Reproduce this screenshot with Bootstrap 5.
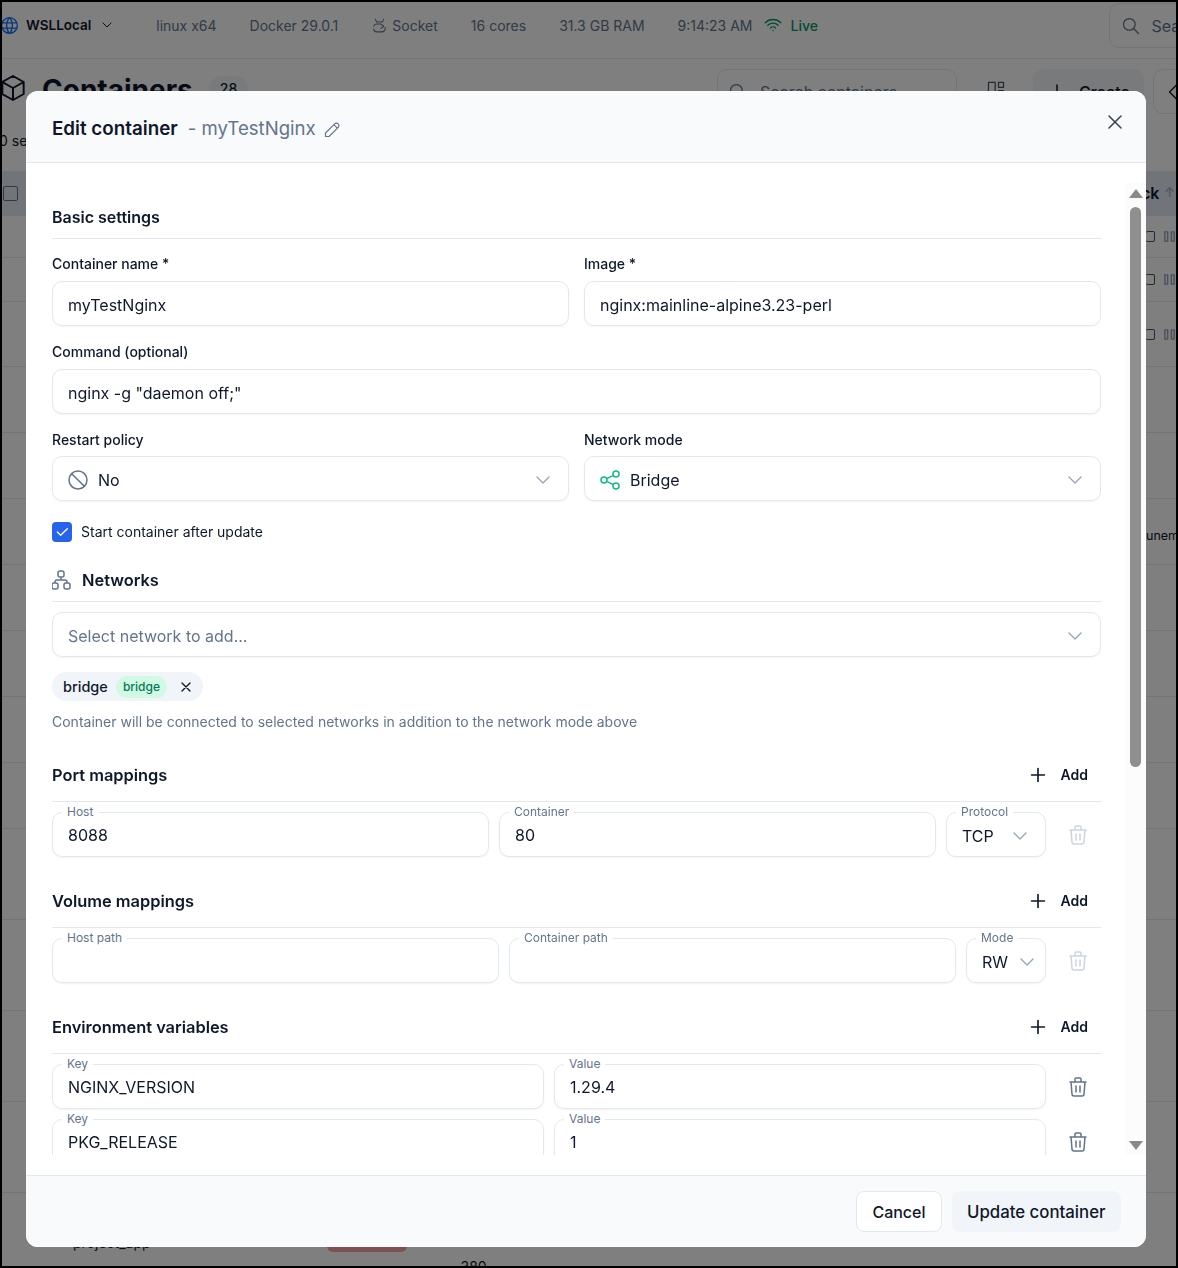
<!DOCTYPE html>
<html lang="en">
  <head>
    <meta charset="UTF-8" />
    <meta name="viewport" content="width=device-width, initial-scale=1.0" />
    <title>Edit container</title>
    <link href="https://cdn.jsdelivr.net/npm/bootstrap@5.3.3/dist/css/bootstrap.min.css" rel="stylesheet" />
    <style>
      html, body { height: 100%; overflow: hidden; }
      body { font-family: Inter, "Noto Sans", sans-serif; color: #0f172a; font-size: 14px; }
      .ico { fill: none; stroke: currentColor; stroke-width: 1.5; stroke-linecap: round; stroke-linejoin: round; flex: none; }

      /* page behind the dialog */
      .shot-frame { height: 1268px; border: 2px solid #000; overflow: hidden; background: #fff; }
      .top-strip { height: 57px; border-bottom: 1px solid #e2e8f0; gap: 16.5px; padding-bottom: 10px; color: #64748b; white-space: nowrap; }
      .strip-sep { width: 1px; height: 18px; background: #cbd5e1; }
      .strip-host { color: #0f172a; font-weight: 600; font-size: 13.5px; gap: 6px; margin-right: 8px; }
      .strip-host .ico:first-child { margin-left: -3px; }
      .strip-chev { margin-left: 2px; }
      .strip-wifi { margin-left: -7.5px; }
      .strip-live { color: #059669; font-weight: 500; gap: 7px; }
      .strip-search { width: 200px; height: 45px; border: 1px solid #e2e8f0; border-radius: 10px; padding-left: 11px; gap: 10px; margin-left: 275px; margin-top: 1px; flex: none; font-size: 16px; }
      .title-zone { height: 112px; }
      .title-cube { margin: 13px 0 0 -5px; }
      .title-text { font-size: 28px; font-weight: 700; line-height: 36px; margin: 13px 0 0 13px; }
      .count-pill { background: #f1f5f9; border-radius: 14px; padding: 2px 11px; font-size: 14px; font-weight: 500; margin: 17px 0 0 16px; }
      .list-search { width: 240px; height: 45px; border: 1px solid #e2e8f0; border-radius: 10px; color: #64748b; padding-left: 10px; gap: 12px; font-size: 16px; margin: 10px 0 0 auto; }
      .view-ico { margin: 20px 27px 0 29px; color: #475569; }
      .create-btn { width: 111px; height: 45px; background: #f1f5f9; border-radius: 10px; gap: 10px; font-size: 16px; font-weight: 500; padding-left: 12px; margin-top: 10px; flex: none; }
      .more-btn { width: 60px; height: 45px; border: 1px solid #e2e8f0; border-radius: 10px; flex: none; margin: 10px -37px 0 9px; padding-left: 13px; }
      .sel-note { left: -3px; bottom: 20px; }
      .tbl-row { border-bottom: 1px solid #e2e8f0; justify-content: flex-end; align-items: center; }
      .tbl-head { background: #e2e8f0; height: 45px; justify-content: space-between; font-weight: 600; font-size: 16px; }
      .box-mark { width: 15px; height: 15px; border: 1px solid #64748b; border-radius: 2px; margin-left: 1px; }
      .row-a { height: 42px; } .row-b { height: 44px; } .row-c { height: 65px; } .row-d { height: 66px; } .row-e { height: 91px; }
      .row-acts { width: 30px; gap: 8px; color: #94a3b8; }
      .row-sq { width: 9px; height: 11px; border: 1px solid #475569; border-left: 0; border-radius: 2px; }
      .head-tail { width: 30px; overflow: hidden; white-space: nowrap; justify-content: flex-end; gap: 5px; }
      .head-sort { color: #94a3b8; font-size: 13px; font-weight: 400; margin-right: -10px; }
      .row-tail { width: 30px; overflow: hidden; white-space: nowrap; font-size: 12.5px; margin-top: 10px; }
      .last-row { justify-content: flex-start; padding-left: 71px; }
      .last-name { margin-top: 8px; }
      .stack-pink { width: 80px; height: 28px; background: #fca5a5; border-radius: 6px; margin-left: 176px; flex: none; }
      .last-num { margin-left: 54px; margin-top: 56px; }

      /* dialog */
      .modal-dialog.edit-dialog { width: 1120px; max-width: none; margin: 91px 0 0 26px; }
      .edit-box { height: 1156px; border: 0; border-radius: 12px; overflow: hidden; }
      .edit-top { height: 72px; background: #f8fafc; border-bottom: 1px solid #e2e8f0; padding: 5px 26px 0; position: relative; border-radius: 0; }
      .edit-title { font-size: 18.8px; font-weight: 600; margin: 0; }
      .edit-name { font-size: 18.6px; color: #64748b; margin-left: 10px; }
      .edit-pencil { color: #64748b; margin-left: 6px; stroke-width: 1.3; }
      .edit-close { position: absolute; top: 19px; right: 19px; color: #334155; }
      .edit-body { padding: 20px 45px 20px 26px; position: relative; overflow: hidden; flex: 1 1 auto; min-height: 0; background: #fff; }
      .edit-scroll { height: 100%; overflow: hidden; }
      .edit-foot { height: 72px; background: #f8fafc; border-top: 1px solid #e2e8f0; padding: 0 25px 0 0; gap: 10px; border-radius: 0; }
      .foot-btn { height: 41px; font-weight: 500; color: #0f172a; border-radius: 8px; margin: 0; }
      .foot-cancel { background: #fff; border: 1px solid #e2e8f0; font-size: 16px; padding: 1px 15px 0; }
      .foot-save { background: #f1f5f9; border: 0; font-size: 16.8px; padding: 3px 15.5px 0; }

      .sec-head { border-bottom: 1px solid #e2e8f0; font-size: 16.4px; font-weight: 600; line-height: 24px; padding-bottom: 9px; margin: 0; }
      .sec-first { margin-top: 22px; font-size: 16px; }
      .sec-net { margin-top: 26px; gap: 9px; }
      .sec-net .ico { color: #64748b; margin-left: -3px; }
      .sec-map { padding-bottom: 14px; justify-content: space-between; align-items: center; }
      .sec-port { margin-top: 31px; }
      .sec-more { margin-top: 32px; }
      .add-act { gap: 12px; font-size: 14px; font-weight: 600; padding-right: 13px; }
      .add-act .ico { stroke-width: 1.8; }

      .gx-field { --bs-gutter-x: 15px; }
      .field-cap { display: block; font-size: 14px; font-weight: 500; line-height: 20px; margin: 0 0 7px; }
      .cap-gap { margin-top: 16px; }
      .cap-first { margin-top: 15px; }
      .cap-pick { margin-bottom: 6px; }
      .edit-input.form-control, .edit-pick { height: 45px; border: 1px solid #e2e8f0; border-radius: 10px; font-size: 16px; color: #0f172a; padding: 2px 15px 0; box-shadow: 0 1px 2px rgba(15, 23, 42, .05); background: #fff; }
      .edit-pick { gap: 8px; justify-content: flex-start; }
      .pick-lead { margin-left: -2px; }
      .pick-arrow { margin-left: auto; margin-right: -2px; color: #94a3b8; stroke-width: 1.3; }
      .pick-muted { color: #64748b; }
      .pick-green { color: #10b981; }
      .start-row { margin-top: 20px; height: 21px; gap: 9px; }
      .start-box { width: 20px; height: 20px; background: #2563eb; border-radius: 4px; color: #fff; }
      .start-box .ico { stroke-width: 2; }
      .net-pick { margin-top: 10px; }
      .net-chip { margin-top: 15px; height: 29px; background: #f1f5f9; border-radius: 15px; padding: 0 9px 0 11px; font-size: 14.5px; font-weight: 500; }
      .net-tag { background: #d1fae5; color: #047857; font-size: 12px; font-weight: 500; border-radius: 11px; padding: 1px 7px; margin: 0 11px 0 8px; line-height: 20px; }
      .net-chip .ico { stroke-width: 2; }
      .net-help { color: #64748b; margin-top: 11px; line-height: 20px; }
      .map-row { margin-top: 10px; gap: 10px; }
      .map-field { position: relative; flex: 1 1 0; min-width: 0; }
      .map-field .edit-input.form-control { padding-top: 1px; }
      .map-pick { flex: none; }
      .pick-proto { width: 100px; }
      .pick-mode { width: 80px; }
      .pick-mode .pick-arrow { margin-right: -9px; }
      .map-cap { position: absolute; top: -8px; left: 10px; padding: 0 5px; background: #fff; font-size: 12px; line-height: 16px; color: #64748b; z-index: 1; }
      .map-del { width: 45px; color: #64748b; flex: none; padding-right: 2px; }
      .map-off { color: #cbd5e1; }
      .pick-tight { gap: 4px; }

      .fake-bar { position: absolute; top: 20px; bottom: 20px; right: 0; width: 20px; background: #fcfcfc; }
      .bar-up, .bar-down { position: absolute; left: 3px; width: 0; height: 0; border-left: 7px solid transparent; border-right: 7px solid transparent; }
      .bar-up { top: 6px; border-bottom: 9px solid #8a8a8a; }
      .bar-down { bottom: 5px; border-top: 9px solid #8a8a8a; }
      .bar-thumb { position: absolute; top: 24px; left: 4px; width: 11px; height: 560px; background: #8f8f8f; border-radius: 6px; }
    </style>
  </head>
  <body>
    <svg class="d-none">
      <symbol id="i-chev" viewBox="0 0 24 24"><path d="M6 9l6 6l6 -6" /></symbol>
      <symbol id="i-trash" viewBox="0 0 24 24"><path d="M4 7l16 0M10 11l0 6M14 11l0 6M5 7l1 12a2 2 0 0 0 2 2h8a2 2 0 0 0 2 -2l1 -12M9 7v-3a1 1 0 0 1 1 -1h4a1 1 0 0 1 1 1v3" /></symbol>
      <symbol id="i-plus" viewBox="0 0 24 24"><path d="M12 5l0 14M5 12l14 0" /></symbol>
      <symbol id="i-search" viewBox="0 0 24 24"><path d="M3 10a7 7 0 1 0 14 0a7 7 0 1 0 -14 0M21 21l-6 -6" /></symbol>
      <symbol id="i-pause" viewBox="0 0 14 14"><path d="M2 2h3v10h-3zM9 2h3v10h-3z" /></symbol>
    </svg>

    <div class="shot-frame">
      <div class="top-strip d-flex align-items-center">
        <div class="strip-host d-flex align-items-center">
          <svg class="ico text-primary" width="21" height="21" viewBox="0 0 24 24"><path d="M3 12a9 9 0 1 0 18 0a9 9 0 0 0 -18 0M3.6 9h16.8M3.6 15h16.8M11.5 3a17 17 0 0 0 0 18M12.5 3a17 17 0 0 1 0 18" /></svg>
          <span>WSLLocal</span>
          <svg class="ico strip-chev" width="16" height="16"><use href="#i-chev" /></svg>
        </div>
        <span class="strip-sep"></span>
        <span>linux x64</span>
        <span class="strip-sep"></span>
        <span>Docker 29.0.1</span>
        <span class="strip-sep"></span>
        <span class="d-flex align-items-center gap-1">
          <svg class="ico" width="17" height="17" viewBox="0 0 24 24"><path d="M6 3l2 4h8l2 -4M4 13a4 4 0 0 1 4 -3h6M20 15a5 5 0 0 1 -4 6h-8a4 4 0 0 1 -4 -4M14 10l4 3l-4 3" /></svg>
          Socket
        </span>
        <span class="strip-sep"></span>
        <span>16 cores</span>
        <span class="strip-sep"></span>
        <span>31.3 GB RAM</span>
        <span class="strip-sep"></span>
        <span>9:14:23 AM</span>
        <span class="strip-live strip-wifi d-flex align-items-center">
          <svg class="ico" width="22" height="22" viewBox="0 0 24 24"><path d="M12 18l.01 0M9.172 15.172a4 4 0 0 1 5.656 0M6.343 12.343a8 8 0 0 1 11.314 0M3.515 9.515c4.686 -4.687 12.284 -4.687 17 0" /></svg>
          Live
        </span>
        <div class="strip-search d-flex align-items-center">
          <svg class="ico" width="20" height="20"><use href="#i-search" /></svg>
          <span>Search</span>
        </div>
      </div>

      <div class="title-zone position-relative">
        <div class="d-flex align-items-start">
          <svg class="ico title-cube" width="32" height="32" viewBox="0 0 24 24"><path d="M12 3l8 4.5v9l-8 4.5l-8 -4.5v-9l8 -4.5M12 12l8 -4.5M12 12v9M12 12l-8 -4.5" /></svg>
          <h1 class="title-text">Containers</h1>
          <span class="count-pill">28</span>
          <div class="list-search d-flex align-items-center">
            <svg class="ico" width="20" height="20"><use href="#i-search" /></svg>
            <span>Search containers</span>
          </div>
          <svg class="ico view-ico" width="20" height="20" viewBox="0 0 24 24"><path d="M3 4h8v16h-8zM15 4h6v6h-6zM15 14h6v6h-6z" /></svg>
          <div class="create-btn d-flex align-items-center">
            <svg class="ico" width="24" height="24"><use href="#i-plus" /></svg>
            <span>Create</span>
          </div>
          <div class="more-btn d-flex align-items-center">
            <svg class="ico" width="20" height="20" viewBox="0 0 24 24"><path d="M12 3l9 9l-9 9l-9 -9z" /></svg>
          </div>
        </div>
        <div class="sel-note position-absolute">0 selected</div>
      </div>

      <div class="tbl-head tbl-row d-flex">
        <span class="box-mark"></span>
        <span class="head-tail d-flex align-items-center"><span>Stack</span><span class="head-sort">↑↓</span></span>
      </div>
      <div class="tbl-row row-a d-flex"><span class="row-acts d-flex align-items-center"><span class="row-sq"></span><svg class="ico" width="13" height="13"><use href="#i-pause" /></svg></span></div>
      <div class="tbl-row row-b d-flex"><span class="row-acts d-flex align-items-center"><span class="row-sq"></span><svg class="ico" width="13" height="13"><use href="#i-pause" /></svg></span></div>
      <div class="tbl-row row-c d-flex"><span class="row-acts d-flex align-items-center"><span class="row-sq"></span><svg class="ico" width="13" height="13"><use href="#i-pause" /></svg></span></div>
      <div class="tbl-row row-d d-flex"></div>
      <div class="tbl-row row-d d-flex"></div>
      <div class="tbl-row row-d d-flex"><span class="row-tail">unem</span></div>
      <div class="tbl-row row-d d-flex"></div>
      <div class="tbl-row row-d d-flex"></div>
      <div class="tbl-row row-d d-flex"></div>
      <div class="tbl-row row-d d-flex"></div>
      <div class="tbl-row row-e d-flex"></div>
      <div class="tbl-row row-e d-flex"></div>
      <div class="tbl-row row-e d-flex"></div>
      <div class="tbl-row row-e d-flex"></div>
      <div class="tbl-row row-e d-flex last-row">
        <span class="last-name">project_app</span>
        <span class="stack-pink"></span>
        <span class="last-num">380</span>
      </div>
    </div>

    <div class="modal-backdrop show"></div>

    <div class="modal d-block">
      <div class="modal-dialog edit-dialog">
        <div class="modal-content edit-box d-flex flex-column">
          <div class="modal-header edit-top d-flex align-items-center justify-content-start">
            <h5 class="edit-title">Edit container</h5>
            <span class="edit-name">- myTestNginx</span>
            <svg class="ico edit-pencil" width="21" height="21" viewBox="0 0 24 24"><path d="M4 20h4l10.5 -10.5a2.828 2.828 0 1 0 -4 -4l-10.5 10.5v4M13.5 6.5l4 4" /></svg>
            <svg class="ico edit-close" width="24" height="24" viewBox="0 0 24 24"><path d="M18 6l-12 12M6 6l12 12" /></svg>
          </div>

          <div class="modal-body edit-body">
            <div class="edit-scroll">
              <div class="sec-head sec-first">Basic settings</div>
              <div class="row gx-field">
                <div class="col-6">
                  <label class="field-cap cap-first">Container name *</label>
                  <input class="form-control edit-input" value="myTestNginx" />
                </div>
                <div class="col-6">
                  <label class="field-cap cap-first">Image *</label>
                  <input class="form-control edit-input" value="nginx:mainline-alpine3.23-perl" />
                </div>
              </div>
              <label class="field-cap cap-gap">Command (optional)</label>
              <input class="form-control edit-input" value='nginx -g "daemon off;"' />
              <div class="row gx-field">
                <div class="col-6">
                  <label class="field-cap cap-gap cap-pick">Restart policy</label>
                  <div class="edit-pick d-flex align-items-center">
                    <svg class="ico pick-muted pick-lead" width="24" height="24" viewBox="0 0 24 24"><path d="M3 12a9 9 0 1 0 18 0a9 9 0 1 0 -18 0M5.7 5.7l12.6 12.6" /></svg>
                    <span>No</span>
                    <svg class="ico pick-arrow" width="24" height="24"><use href="#i-chev" /></svg>
                  </div>
                </div>
                <div class="col-6">
                  <label class="field-cap cap-gap cap-pick">Network mode</label>
                  <div class="edit-pick d-flex align-items-center">
                    <svg class="ico pick-green pick-lead" width="24" height="24" viewBox="0 0 24 24"><path d="M3 12a3 3 0 1 0 6 0a3 3 0 1 0 -6 0M15 6a3 3 0 1 0 6 0a3 3 0 1 0 -6 0M15 18a3 3 0 1 0 6 0a3 3 0 1 0 -6 0M8.7 10.7l6.6 -3.4M8.7 13.3l6.6 3.4" /></svg>
                    <span>Bridge</span>
                    <svg class="ico pick-arrow" width="24" height="24"><use href="#i-chev" /></svg>
                  </div>
                </div>
              </div>
              <div class="start-row d-flex align-items-center">
                <span class="start-box d-flex align-items-center justify-content-center">
                  <svg class="ico" width="16" height="16" viewBox="0 0 24 24"><path d="M5 12l5 5l10 -10" /></svg>
                </span>
                <span>Start container after update</span>
              </div>

              <div class="sec-head sec-net d-flex align-items-center">
                <svg class="ico" width="24" height="24" viewBox="0 0 24 24"><path d="M3 17a2 2 0 0 1 2 -2h2a2 2 0 0 1 2 2v2a2 2 0 0 1 -2 2h-2a2 2 0 0 1 -2 -2zM15 17a2 2 0 0 1 2 -2h2a2 2 0 0 1 2 2v2a2 2 0 0 1 -2 2h-2a2 2 0 0 1 -2 -2zM9 5a2 2 0 0 1 2 -2h2a2 2 0 0 1 2 2v2a2 2 0 0 1 -2 2h-2a2 2 0 0 1 -2 -2zM6 15v-1a2 2 0 0 1 2 -2h8a2 2 0 0 1 2 2v1M12 9l0 3" /></svg>
                <span>Networks</span>
              </div>
              <div class="edit-pick net-pick d-flex align-items-center">
                <span class="pick-muted">Select network to add...</span>
                <svg class="ico pick-arrow" width="24" height="24"><use href="#i-chev" /></svg>
              </div>
              <div class="net-chip d-inline-flex align-items-center">
                <span>bridge</span>
                <span class="net-tag">bridge</span>
                <svg class="ico" width="16" height="16" viewBox="0 0 24 24"><path d="M18 6l-12 12M6 6l12 12" /></svg>
              </div>
              <div class="net-help">Container will be connected to selected networks in addition to the network mode above</div>

              <div class="sec-head sec-map sec-port d-flex">
                <span>Port mappings</span>
                <span class="add-act d-flex align-items-center"><svg class="ico" width="22" height="22"><use href="#i-plus" /></svg>Add</span>
              </div>
              <div class="map-row d-flex">
                <div class="map-field"><span class="map-cap">Host</span><input class="form-control edit-input" value="8088" /></div>
                <div class="map-field"><span class="map-cap">Container</span><input class="form-control edit-input" value="80" /></div>
                <div class="map-field map-pick pick-proto">
                  <span class="map-cap">Protocol</span>
                  <div class="edit-pick pick-tight d-flex align-items-center"><span>TCP</span><svg class="ico pick-arrow" width="24" height="24"><use href="#i-chev" /></svg></div>
                </div>
                <div class="map-del map-off d-flex align-items-center justify-content-center"><svg class="ico" width="24" height="24"><use href="#i-trash" /></svg></div>
              </div>

              <div class="sec-head sec-map sec-more d-flex">
                <span>Volume mappings</span>
                <span class="add-act d-flex align-items-center"><svg class="ico" width="22" height="22"><use href="#i-plus" /></svg>Add</span>
              </div>
              <div class="map-row d-flex">
                <div class="map-field"><span class="map-cap">Host path</span><input class="form-control edit-input" value="" /></div>
                <div class="map-field"><span class="map-cap">Container path</span><input class="form-control edit-input" value="" /></div>
                <div class="map-field map-pick pick-mode">
                  <span class="map-cap">Mode</span>
                  <div class="edit-pick pick-tight d-flex align-items-center"><span>RW</span><svg class="ico pick-arrow" width="24" height="24"><use href="#i-chev" /></svg></div>
                </div>
                <div class="map-del map-off d-flex align-items-center justify-content-center"><svg class="ico" width="24" height="24"><use href="#i-trash" /></svg></div>
              </div>

              <div class="sec-head sec-map sec-more d-flex">
                <span>Environment variables</span>
                <span class="add-act d-flex align-items-center"><svg class="ico" width="22" height="22"><use href="#i-plus" /></svg>Add</span>
              </div>
              <div class="map-row d-flex">
                <div class="map-field"><span class="map-cap">Key</span><input class="form-control edit-input" value="NGINX_VERSION" /></div>
                <div class="map-field"><span class="map-cap">Value</span><input class="form-control edit-input" value="1.29.4" /></div>
                <div class="map-del d-flex align-items-center justify-content-center"><svg class="ico" width="24" height="24"><use href="#i-trash" /></svg></div>
              </div>
              <div class="map-row d-flex">
                <div class="map-field"><span class="map-cap">Key</span><input class="form-control edit-input" value="PKG_RELEASE" /></div>
                <div class="map-field"><span class="map-cap">Value</span><input class="form-control edit-input" value="1" /></div>
                <div class="map-del d-flex align-items-center justify-content-center"><svg class="ico" width="24" height="24"><use href="#i-trash" /></svg></div>
              </div>
            </div>
            <div class="fake-bar">
              <span class="bar-up"></span>
              <span class="bar-thumb"></span>
              <span class="bar-down"></span>
            </div>
          </div>

          <div class="modal-footer edit-foot d-flex align-items-center justify-content-end">
            <button class="btn foot-btn foot-cancel" type="button">Cancel</button>
            <button class="btn foot-btn foot-save" type="button">Update container</button>
          </div>
        </div>
      </div>
    </div>

    <script src="https://cdn.jsdelivr.net/npm/bootstrap@5.3.3/dist/js/bootstrap.bundle.min.js"></script>
  </body>
</html>
